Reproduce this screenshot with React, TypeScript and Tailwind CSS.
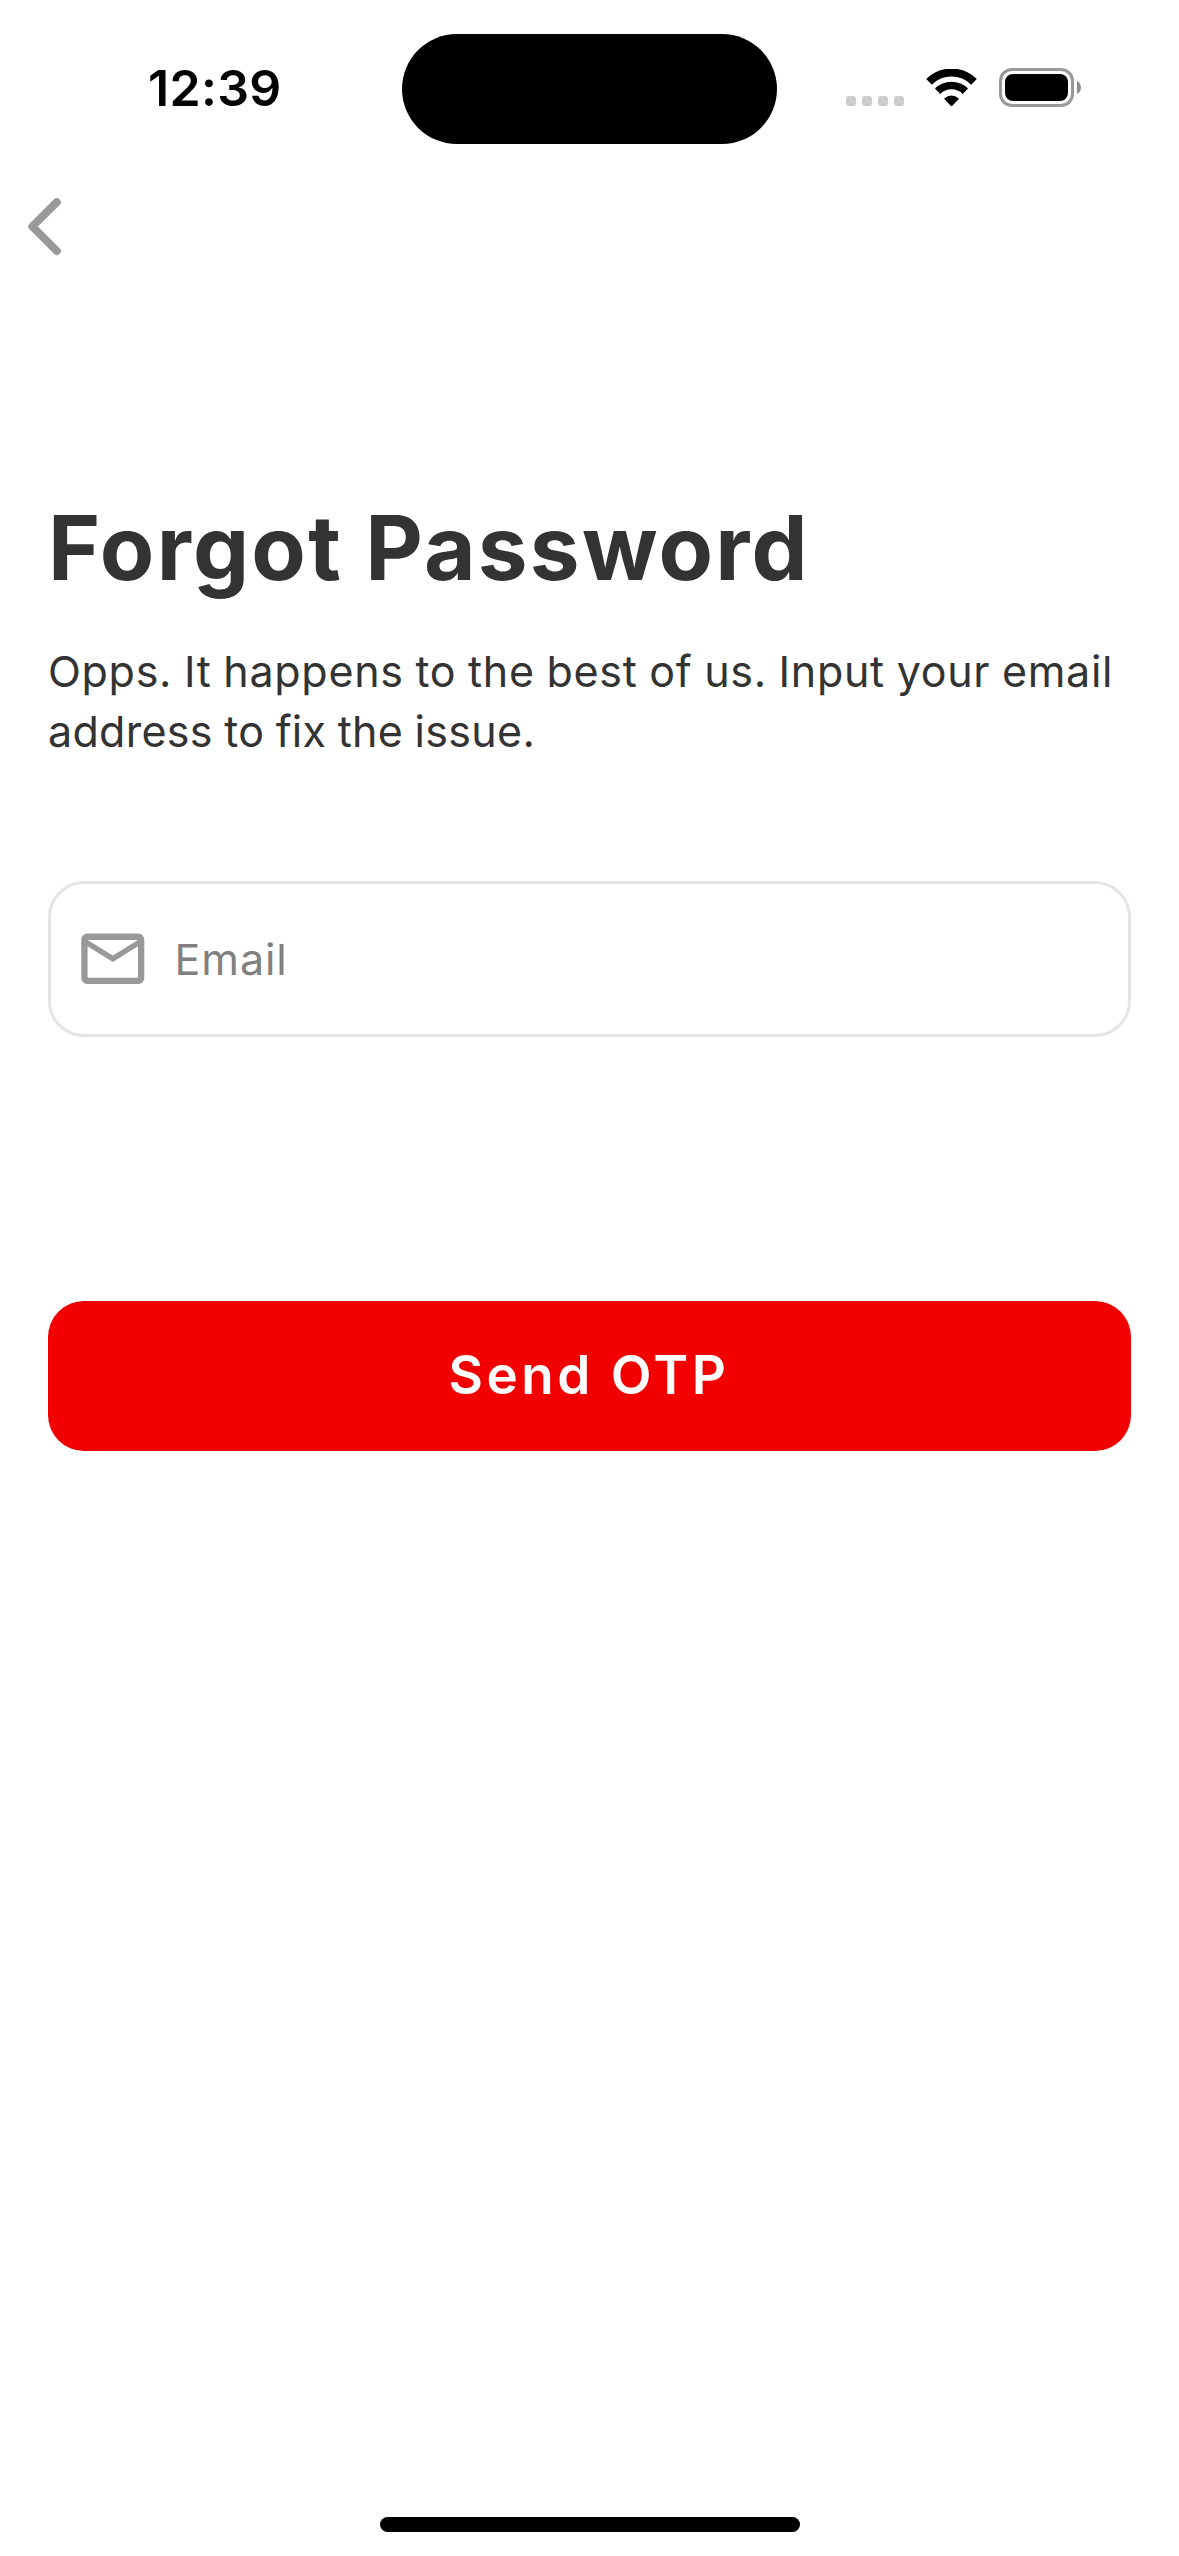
import React from "react";

function WifiIcon() {
  return (
    <svg className="h-[38px] w-[51px]" viewBox="0 0 51 38" fill="none">
      <path d="M3 14.2 A32 32 0 0 1 48 14.2" stroke="#000" strokeWidth="8" transform="translate(0 -1.4)" />
      <path d="M11.6 22.2 A20 20 0 0 1 39.4 22.2" stroke="#000" strokeWidth="7.5" />
      <path d="M18 29.8 Q25.5 23 33 29.8 L26.3 36.8 Q25.5 37.6 24.7 36.8 Z" fill="#000" />
    </svg>
  );
}

function BatteryIcon() {
  return (
    <div className="flex items-center gap-[3px]">
      <div className="h-[39px] w-[75px] rounded-[13px] border-[3px] border-[#999999] p-[3px]">
        <div className="h-full w-full rounded-[8px] bg-black" />
      </div>
      <svg className="h-[13px] w-1" viewBox="0 0 4 13" fill="#8c8c8c">
        <path d="M0 0 C5.3 2.5 5.3 10.5 0 13 Z" />
      </svg>
    </div>
  );
}

function StatusBar() {
  return (
    <header className="flex h-[177px] items-start">
      <div className="w-[402px] pt-[58px] pl-[148px] text-[50px] leading-[60px] font-semibold tracking-[0.3px] text-black">
        12:39
      </div>
      <div className="mt-[34px] h-[110px] w-[375px] rounded-full bg-black" />
      <div className="mt-[68px] ml-[69px] flex h-[39px] items-end">
        <div className="mb-px flex gap-1.5">
          <span className="size-2.5 rounded-[3px] bg-[#cccccc]" />
          <span className="size-2.5 rounded-[3px] bg-[#cccccc]" />
          <span className="size-2.5 rounded-[3px] bg-[#cccccc]" />
          <span className="size-2.5 rounded-[3px] bg-[#cccccc]" />
        </div>
        <div className="ml-[22px]">
          <WifiIcon />
        </div>
        <div className="ml-[22px]">
          <BatteryIcon />
        </div>
      </div>
    </header>
  );
}

export default function App() {
  return (
    <div className="flex h-[2556px] w-[1179px] flex-col overflow-hidden bg-white font-['Inter',sans-serif] text-[#333333]">
      <StatusBar />
      <button aria-label="Back" className="ml-6 mt-[17px] h-[66px] w-[42px]">
        <svg className="h-[66px] w-[42px]" viewBox="0 0 42 66" fill="none" stroke="#999999" strokeWidth="8" strokeLinecap="round" strokeLinejoin="round">
          <path d="M32.8 8.2 L8.3 32.5 L32.8 57" />
        </svg>
      </button>
      <main className="flex flex-col px-12">
        <h1 className="mt-[236px] text-[89px] leading-[104px] font-bold tracking-[2.2px] [word-spacing:-1px] whitespace-nowrap">
          Forgot Password
        </h1>
        <p className="mt-[41px] text-[43px] leading-[60px] tracking-[0.7px] [word-spacing:-1px] whitespace-nowrap">
          Opps. It happens to the best of us. Input your email
          <br />
          <span className="tracking-[0.3px]">address to fix the issue.</span>
        </p>
        <label className="mt-[120px] flex h-[156px] items-center rounded-[36px] border-[3px] border-[#e5e5e5] pl-6">
          <svg className="size-[75.6px] shrink-0" viewBox="0 0 24 24" fill="#999999">
            <path d="M22 6c0-1.1-.9-2-2-2H4c-1.1 0-2 .9-2 2v12c0 1.1.9 2 2 2h16c1.1 0 2-.9 2-2V6zm-2 0l-8 4.99L4 6h16zm0 12H4V8l8 5 8-5v10z" />
          </svg>
          <input
            type="email"
            placeholder="Email"
            className="ml-6 h-[60px] w-[800px] text-[43px] tracking-[0.9px] outline-none placeholder:text-[#808080]"
          />
        </label>
        <button className="mt-[264px] h-[150px] rounded-[36px] bg-[#f20000] pr-px text-[53px] font-semibold tracking-[3.5px] text-white">
          Send OTP
        </button>
      </main>
      <div className="mx-auto mt-auto mb-6 h-[15px] w-[420px] rounded-full bg-black" />
    </div>
  );
}
